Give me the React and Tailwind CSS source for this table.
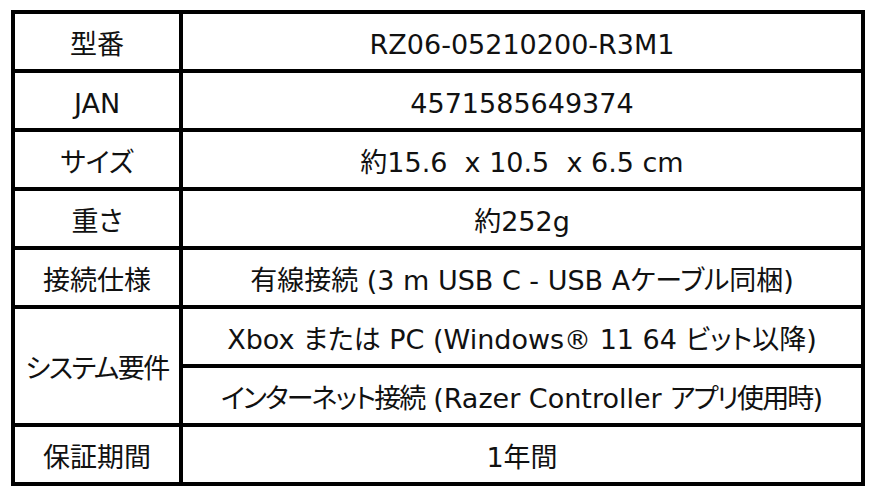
import React from "react";

const rows = [
  ["型番", "RZ06-05210200-R3M1"],
  ["JAN", "4571585649374"],
  ["サイズ", "約15.6  x 10.5  x 6.5 cm"],
  ["重さ", "約252g"],
  ["接続仕様", "有線接続 (3 m USB C - USB Aケーブル同梱)"],
];

function Cell({ children }) {
  return (
    <div className="bg-white flex items-center justify-center pt-[5px] whitespace-pre">
      {children}
    </div>
  );
}

export default function App() {
  return (
    <div className="w-[876px] h-[496px] bg-white pl-[11px] pt-[10px]">
      <div className="w-[854px] grid grid-cols-[164px_678px] grid-rows-[repeat(8,55px)] gap-[4px] p-[4px] bg-black text-[#111] text-[27px] leading-none [font-feature-settings:'palt'] font-['DejaVu_Sans','Noto_Sans_CJK_JP',sans-serif]">
        {rows.map(([k, v]) => (
          <React.Fragment key={k}>
            <Cell>{k}</Cell>
            <Cell>{v}</Cell>
          </React.Fragment>
        ))}
        <div className="row-span-2 bg-white flex items-center justify-center pt-[5px] tracking-[-1.5px]">
          システム要件
        </div>
        <Cell>Xbox または PC (Windows® 11 64 ビット以降)</Cell>
        <Cell>
          <span className="tracking-[-1.8px]">インターネット接続</span> (Razer Controller{" "}
          <span className="tracking-[-1.8px]">アプリ使用時</span>)
        </Cell>
        <Cell>保証期間</Cell>
        <Cell>1年間</Cell>
      </div>
    </div>
  );
}
